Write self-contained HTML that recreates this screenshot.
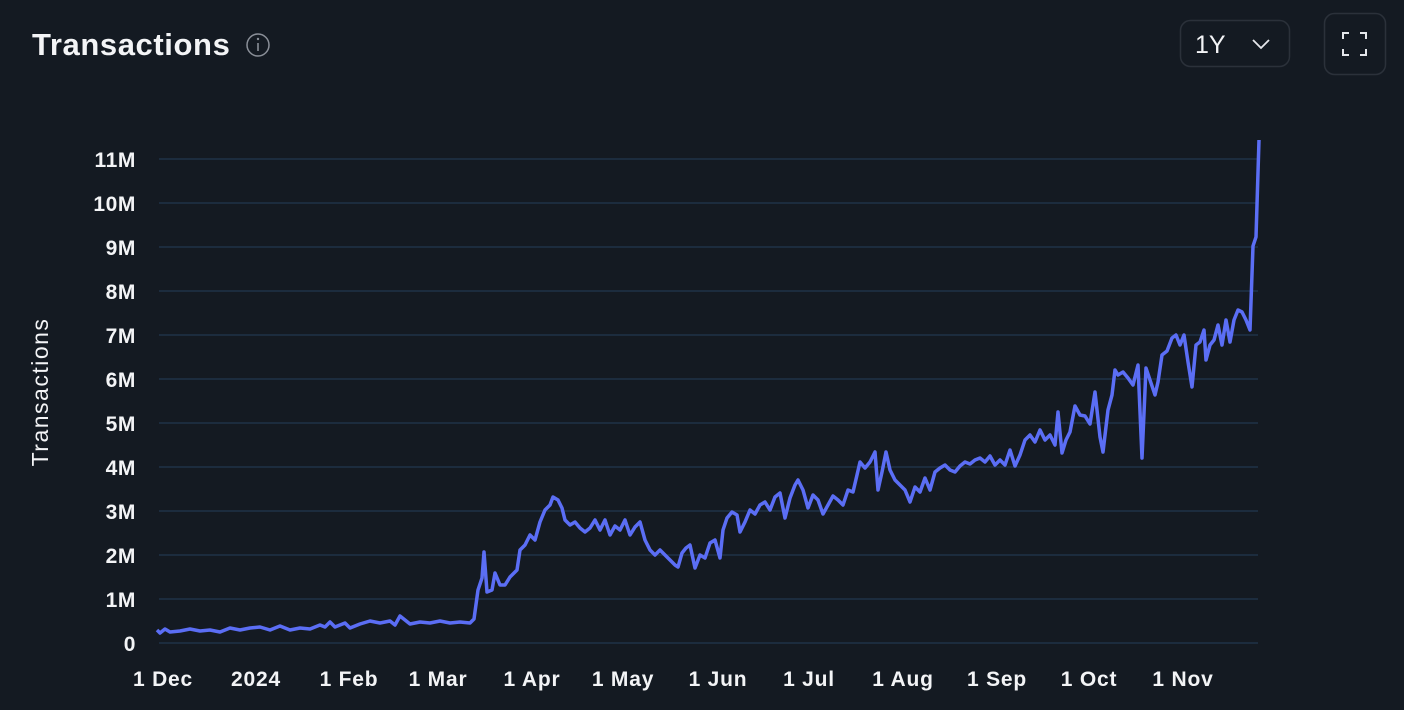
<!DOCTYPE html>
<html><head><style>
html,body{margin:0;padding:0;background:#141a22;width:1404px;height:710px;overflow:hidden;font-family:"Liberation Sans",sans-serif;}
</style></head><body>
<svg width="1404" height="710" xmlns="http://www.w3.org/2000/svg" style="position:absolute;left:0;top:0">
<rect width="1404" height="710" fill="#141a22"/>
<text x="32" y="55" fill="#f3f4f6" font-size="31" font-weight="bold" letter-spacing="0.6" font-family="Liberation Sans, sans-serif">Transactions</text>
<circle cx="258" cy="45" r="11" fill="none" stroke="#8a8f98" stroke-width="1.5"/>
<line x1="258" y1="43" x2="258" y2="51" stroke="#8a8f98" stroke-width="1.6"/>
<circle cx="258" cy="39" r="1.2" fill="#8a8f98"/>
<rect x="1180.5" y="20.5" width="109" height="46" rx="10" fill="none" stroke="#2b313a" stroke-width="1.5"/>
<text x="1195" y="53" fill="#f3f4f6" font-size="25" font-family="Liberation Sans, sans-serif">1Y</text>
<polyline points="1253,40 1261,48 1269,40" fill="none" stroke="#e5e7eb" stroke-width="1.8"/>
<rect x="1324.5" y="13.5" width="61" height="61" rx="10" fill="none" stroke="#2b313a" stroke-width="1.5"/>
<g fill="none" stroke="#e5e7eb" stroke-width="2">
<polyline points="1343,39 1343,33 1349,33"/><polyline points="1360,33 1366,33 1366,39"/>
<polyline points="1343,49 1343,55 1349,55"/><polyline points="1360,55 1366,55 1366,49"/>
</g>
<g stroke="#1f3347" stroke-width="1.5">
<line x1="159" y1="159" x2="1258" y2="159"/><line x1="159" y1="203" x2="1258" y2="203"/>
<line x1="159" y1="247" x2="1258" y2="247"/><line x1="159" y1="291" x2="1258" y2="291"/>
<line x1="159" y1="335" x2="1258" y2="335"/><line x1="159" y1="379" x2="1258" y2="379"/>
<line x1="159" y1="423" x2="1258" y2="423"/><line x1="159" y1="467" x2="1258" y2="467"/>
<line x1="159" y1="511" x2="1258" y2="511"/><line x1="159" y1="555" x2="1258" y2="555"/>
<line x1="159" y1="599" x2="1258" y2="599"/><line x1="159" y1="643" x2="1258" y2="643"/>
</g>
<g fill="#f3f4f6" font-size="21" font-weight="bold" letter-spacing="0.6" font-family="Liberation Sans, sans-serif" text-anchor="end">
<text x="136" y="167">11M</text><text x="136" y="211">10M</text><text x="136" y="255">9M</text>
<text x="136" y="299">8M</text><text x="136" y="343">7M</text><text x="136" y="387">6M</text>
<text x="136" y="431">5M</text><text x="136" y="475">4M</text><text x="136" y="519">3M</text>
<text x="136" y="563">2M</text><text x="136" y="607">1M</text><text x="136" y="651">0</text>
</g>
<text transform="translate(48,392) rotate(-90)" fill="#f3f4f6" font-size="23" letter-spacing="1.5" text-anchor="middle" font-family="Liberation Sans, sans-serif">Transactions</text>
<g fill="#f3f4f6" font-size="21" font-weight="bold" letter-spacing="0.8" font-family="Liberation Sans, sans-serif" text-anchor="middle">
<text x="163" y="686">1 Dec</text><text x="256" y="686">2024</text><text x="349" y="686">1 Feb</text>
<text x="438" y="686">1 Mar</text><text x="532" y="686">1 Apr</text><text x="623" y="686">1 May</text>
<text x="718" y="686">1 Jun</text><text x="809" y="686">1 Jul</text><text x="903" y="686">1 Aug</text>
<text x="997" y="686">1 Sep</text><text x="1089" y="686">1 Oct</text><text x="1183" y="686">1 Nov</text>
</g>
<polyline fill="none" stroke="#5b6ef5" stroke-width="3.5" stroke-linejoin="round" points="157,630 160,633 165,629 170,632 180,631 190,629 200,631 210,630 220,632 230,628 240,630 250,628 260,627 270,630 280,626 290,630 300,628 310,629 320,625 325,627 330,622 335,627 345,623 350,628 360,624 370,621 380,623 390,621 395,625 400,616 410,624 420,622 430,623 440,621 450,623 460,622 470,623 474,619 478,590 482,578 484,552 487,592 492,590 495,573 500,585 505,585 510,577 517,570 520,550 525,545 530,535 535,540 540,522 545,510 550,505 553,497 558,500 562,508 565,520 570,525 575,522 580,528 585,532 590,528 595,520 600,530 605,520 610,535 615,526 620,530 625,520 630,535 635,527 640,522 645,540 650,550 655,555 660,550 665,555 675,565 678,567 682,553 686,548 690,545 695,568 700,555 705,558 710,543 715,540 720,558 723,530 727,518 732,512 737,515 740,532 745,522 750,510 755,514 760,505 765,502 770,510 775,497 780,493 785,518 790,498 795,485 798,480 803,490 808,508 813,495 818,500 823,514 828,505 833,496 838,500 843,505 848,490 853,492 857,475 860,462 865,468 870,462 875,452 878,490 882,472 886,452 890,470 895,480 900,485 905,490 910,502 915,487 920,492 925,478 930,490 935,472 940,468 945,465 950,470 955,472 960,466 965,462 970,464 975,460 980,458 985,462 990,456 995,465 1000,460 1005,465 1010,450 1015,466 1020,455 1025,440 1030,435 1035,442 1040,430 1045,440 1050,435 1055,445 1058,412 1062,453 1066,440 1070,432 1075,406 1080,415 1085,416 1090,424 1095,392 1100,437 1103,452 1108,410 1112,395 1115,370 1118,375 1123,372 1128,378 1133,385 1138,365 1142,458 1146,368 1150,380 1155,395 1158,382 1162,355 1167,351 1172,338 1176,335 1180,345 1184,335 1188,362 1192,387 1196,345 1200,342 1204,330 1206,360 1210,345 1214,340 1218,325 1222,345 1226,320 1230,342 1234,320 1238,310 1242,312 1246,320 1250,330 1253,246 1256,237 1259,140"/>
</svg>
</body></html>
